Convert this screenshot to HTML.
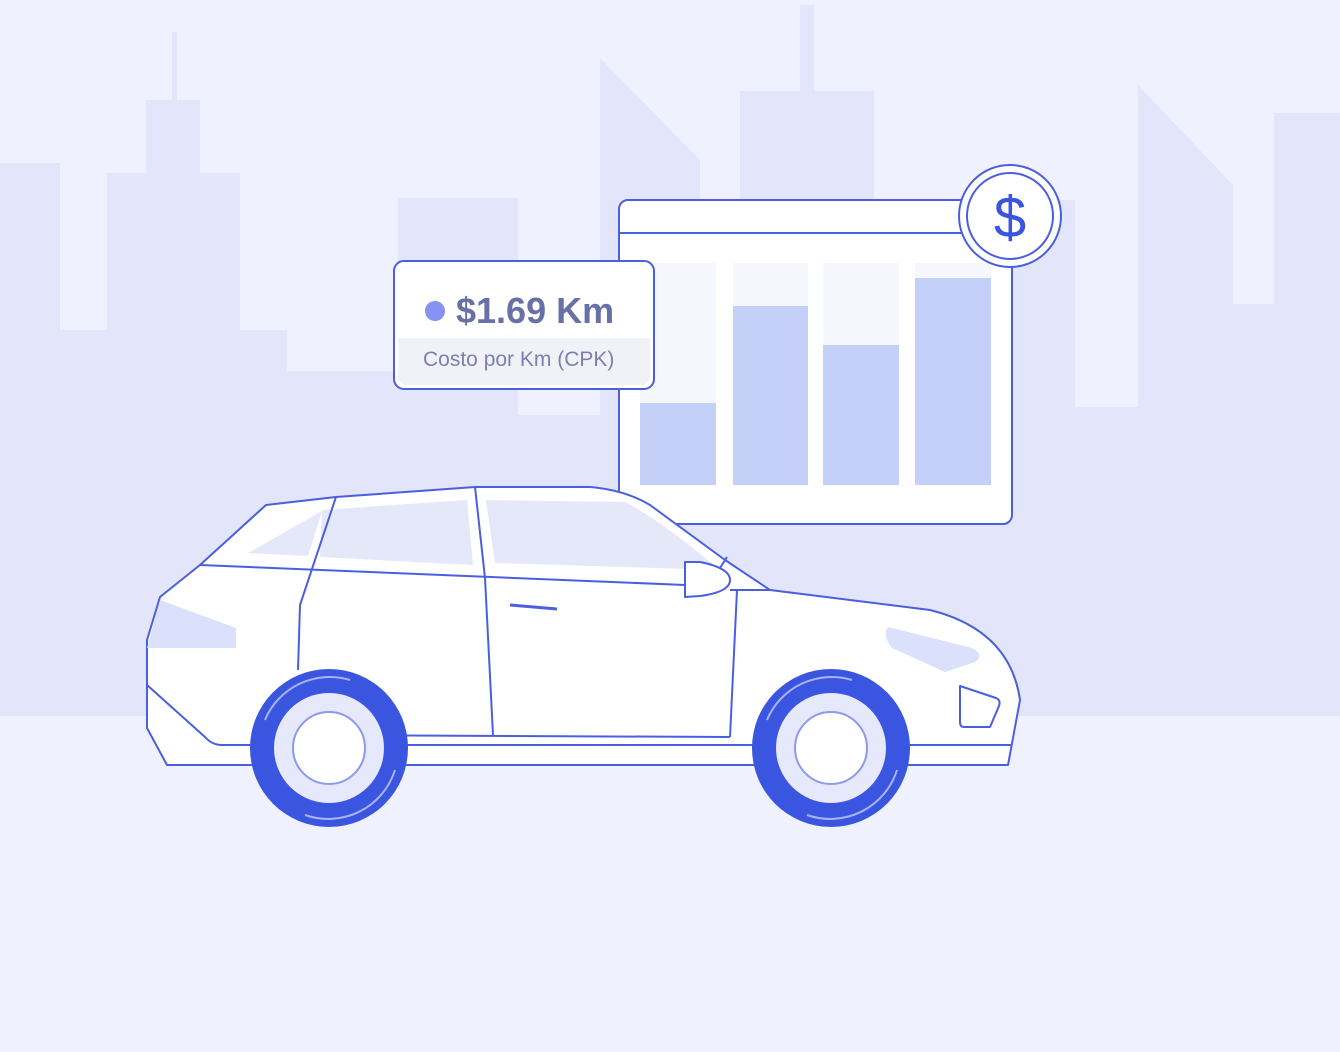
<!DOCTYPE html>
<html><head><meta charset="utf-8"><style>
html,body{margin:0;padding:0;background:#eff1fe;}
svg{display:block}
</style></head><body>
<svg width="1340" height="1052" viewBox="0 0 1340 1052" xmlns="http://www.w3.org/2000/svg">
<rect width="1340" height="1052" fill="#eff1fe"/>
<g fill="#e3e6fb">
<rect x="0" y="163" width="60" height="560"/>
<rect x="60" y="330" width="47" height="390"/>
<rect x="107" y="173" width="133" height="550"/>
<rect x="146" y="100" width="54" height="80"/>
<rect x="172" y="32" width="5" height="70"/>
<rect x="240" y="330" width="47" height="390"/>
<rect x="287" y="371" width="111" height="350"/>
<rect x="398" y="198" width="120" height="520"/>
<rect x="518" y="415" width="82" height="300"/>
<polygon points="600,58 700,160 700,716 600,716"/>
<rect x="700" y="200" width="40" height="516"/>
<rect x="740" y="91" width="134" height="625"/>
<rect x="800" y="5" width="14" height="90"/>
<rect x="874" y="200" width="201" height="516"/>
<rect x="1075" y="407" width="63" height="310"/>
<polygon points="1138,85 1233,185 1233,716 1138,716"/>
<rect x="1233" y="304" width="41" height="412"/>
<rect x="1274" y="113" width="66" height="603"/>
</g>
<rect x="0" y="716" width="1340" height="336" fill="#eff1fe"/>
<!-- chart -->
<rect x="619" y="200" width="393" height="324" rx="9" fill="#fff" stroke="#4a5fe0" stroke-width="2"/>
<line x1="620" y1="233" x2="1011" y2="233" stroke="#4a5fe0" stroke-width="2"/>
<g fill="#f6f7fd">
<rect x="640" y="263" width="76" height="222"/><rect x="733" y="263" width="75" height="222"/>
<rect x="823" y="263" width="76" height="222"/><rect x="915" y="263" width="76" height="222"/>
</g>
<g fill="#c5d0f8">
<rect x="640" y="403" width="76" height="82"/><rect x="733" y="306" width="75" height="179"/>
<rect x="823" y="345" width="76" height="140"/><rect x="915" y="278" width="76" height="207"/>
</g>
<circle cx="1010" cy="216" r="51" fill="#fff" stroke="#4a5fe0" stroke-width="2"/>
<circle cx="1010" cy="216" r="43" fill="#fff" stroke="#4a5fe0" stroke-width="2"/>
<text x="1010" y="237" text-anchor="middle" font-family="Liberation Sans, sans-serif" font-size="58" fill="#3b55e0">$</text>
<!-- card -->
<rect x="394" y="261" width="260" height="128" rx="10" fill="#fff" stroke="#4a5fe0" stroke-width="2"/>
<path d="M398 338 H650 V377 a8 8 0 0 1 -8 8 H406 a8 8 0 0 1 -8 -8 Z" fill="#f1f2f8"/>
<circle cx="435" cy="311" r="10" fill="#8592f2"/>
<text x="456" y="323" font-family="Liberation Sans, sans-serif" font-weight="bold" font-size="36" fill="#6870a8">$1.69 Km</text>
<text x="423" y="366" font-family="Liberation Sans, sans-serif" font-size="21" fill="#7a80b0">Costo por Km (CPK)</text>
<!-- car -->
<g stroke="#4a5fe0" stroke-width="2" stroke-linejoin="round">
<path d="M147 640 L160 597 L200 565 L266 505 L336 497 L475 487 L590 487 Q625 490 650 505 L725 560 L770 590 L930 610 Q1010 630 1020 700 L1008 765 L167 765 L147 728 Z" fill="#fff"/>
<path d="M147 685 L205 737 Q212 745 222 745 L1012 745" fill="none"/>
<path d="M248 553 L322 511 L308 556 Z" fill="#e5e8f8" stroke="none"/>
<path d="M322 510 L467 500 L473 565 L320 557 Z" fill="#e5e8f8" stroke="none"/>
<path d="M486 500 L625 502 Q660 520 720 570 L495 563 Z" fill="#e5e8f8" stroke="none"/>
<path d="M200 565 L685 585" fill="none"/>
<path d="M685 562 L700 562 Q730 568 730 580 Q730 592 700 596 L685 597 Z" fill="#fff"/>
<path d="M730 590 L770 590 M720 568 L727 557" fill="none"/>
<path d="M475 487 L485 578 L493 735 M737 590 L730 737 M300 735 L730 737 M336 497 L300 605 L298 670" fill="none"/>
<path d="M510 605 L557 609" stroke-width="3" fill="none"/>
<path d="M160 600 L236 628 L236 648 L147 648 Z" fill="#dbe1fa" stroke="none"/>
<path d="M888 627 L972 648 Q985 655 975 662 L945 672 L892 648 Q882 635 888 627 Z" fill="#dbe1fa" stroke="none"/>
<path d="M960 686 L996 698 Q1001 700 999 706 L990 727 L964 727 Q960 727 960 722 Z" fill="#fff"/>
</g>
<g>
<circle cx="329" cy="748" r="79" fill="#3a56e0"/>
<circle cx="329" cy="748" r="55" fill="#e6e9fb"/>
<circle cx="329" cy="748" r="36" fill="#fff" stroke="#8a9aee" stroke-width="2"/>
<path d="M265 720 A70 70 0 0 1 350 680 M395 770 A70 70 0 0 1 305 815" fill="none" stroke="#a8b4f4" stroke-width="2"/>
<circle cx="831" cy="748" r="79" fill="#3a56e0"/>
<circle cx="831" cy="748" r="55" fill="#e6e9fb"/>
<circle cx="831" cy="748" r="36" fill="#fff" stroke="#8a9aee" stroke-width="2"/>
<path d="M767 720 A70 70 0 0 1 852 680 M897 770 A70 70 0 0 1 807 815" fill="none" stroke="#a8b4f4" stroke-width="2"/>
</g>
</svg>
</body></html>
